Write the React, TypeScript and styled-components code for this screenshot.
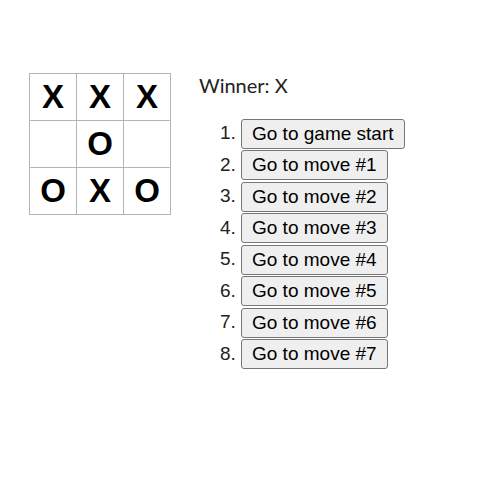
import styled, { createGlobalStyle } from 'styled-components';

const GlobalStyle = createGlobalStyle`
    body {
        margin: 0;
        background: #fff;
        font-family: "Century Gothic", Lato, "Noto Sans", sans-serif;
    }
`;

const Game = styled.div`
    display: flex;
    flex-direction: row;
    padding: 73px 0 0 29px;
`;

const Board = styled.div`
    display: flex;
    flex-direction: column;
    padding-top: 1px;
`;

const BoardRow = styled.div`
    display: flex;
`;

const Square = styled.button`
    box-sizing: border-box;
    width: 48px;
    height: 48px;
    margin-right: -1px;
    margin-top: -1px;
    padding: 0;
    background: #fff;
    border: 1px solid #b4b4b4;
    border-radius: 0;
    font-family: "Liberation Sans", Arial, sans-serif;
    font-size: 33px;
    font-weight: bold;
    line-height: 46px;
    color: #000;
    text-align: center;
`;

const GameInfo = styled.div`
    margin-left: 29px;
`;

const Status = styled.div`
    font-size: 20px;
    line-height: 24px;
    color: #222;
`;

const Moves = styled.ol`
    margin: 20px 0 0;
    padding-left: 42px;
    font-family: "Liberation Sans", Arial, sans-serif;
    font-size: 19px;
    color: #222;
`;

const Move = styled.li`
    height: 31.5px;
    line-height: 31.5px;
`;

const MoveButton = styled.button`
    vertical-align: middle;
    font-family: "Liberation Sans", Arial, sans-serif;
    font-size: 19px;
    line-height: 22px;
    padding: 3px 10px;
    color: #000;
    background: #efefef;
    border: 1px solid #767676;
    border-radius: 3px;
`;

const squares = ['X', 'X', 'X', null, 'O', null, 'O', 'X', 'O'];
const history = ['Go to game start', ...Array.from({ length: 7 }, (_, i) => `Go to move #${i + 1}`)];

export default function App() {
    return (
        <>
            <GlobalStyle />
            <Game>
                <Board>
                    {[0, 1, 2].map(r => (
                        <BoardRow key={r}>
                            {[0, 1, 2].map(c => (
                                <Square key={c}>{squares[r * 3 + c]}</Square>
                            ))}
                        </BoardRow>
                    ))}
                </Board>
                <GameInfo>
                    <Status>Winner: X</Status>
                    <Moves>
                        {history.map(desc => (
                            <Move key={desc}>
                                <MoveButton>{desc}</MoveButton>
                            </Move>
                        ))}
                    </Moves>
                </GameInfo>
            </Game>
        </>
    );
}
